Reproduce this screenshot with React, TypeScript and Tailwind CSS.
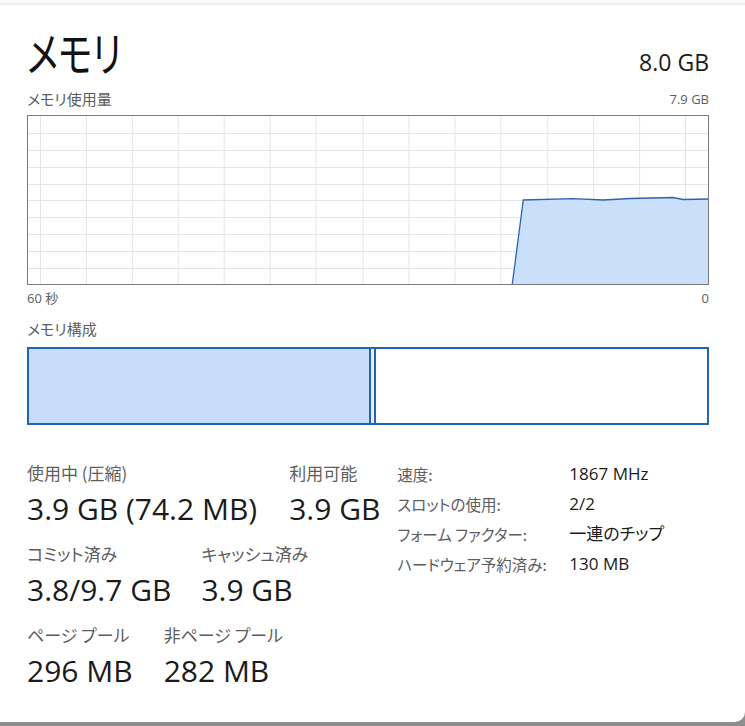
import React from 'react';

const JP = "font-['Noto_Sans_CJK_JP',sans-serif] [font-feature-settings:'palt']";
const LAT = "font-['Open_Sans','Noto_Sans_CJK_JP',sans-serif] [font-feature-settings:'palt']";

const vLines = [12, 58, 104, 150, 196, 242, 288, 335, 381, 427, 473, 520, 566, 612, 658];
const hLines = [17, 34, 51, 68, 84, 101, 118, 135, 152];

const UsageGraph: React.FC = () => {
    const pts = '485,168 496,84 546,82.7 576,84 603,82.5 646,81.5 656,83.5 682,83';
    return (
        <div className="h-[170px] w-full border border-[#7b7b7b] bg-white">
            <svg width="100%" height="168" viewBox="0 0 681 168" preserveAspectRatio="none" className="block">
                {vLines.map(x => (
                    <line key={`v${x}`} x1={x + 0.5} y1={0} x2={x + 0.5} y2={168} stroke="#e5e5e5" strokeWidth={1} />
                ))}
                {hLines.map(y => (
                    <line key={`h${y}`} x1={0} y1={y + 0.5} x2={681} y2={y + 0.5} stroke="#e5e5e5" strokeWidth={1} />
                ))}
                <polygon points={`${pts} 682,168`} fill="#c3dbfa" fillOpacity={0.9} />
                <polyline points={pts} fill="none" stroke="#2c63b3" strokeWidth={1.3} />
            </svg>
        </div>
    );
};

const CompositionBar: React.FC = () => (
    <div className="flex h-[78px] w-full border-2 border-[#2262b9]">
        <div className="w-[342px] border-r-2 border-[#2262b9] bg-[#c8ddf9]" />
        <div className="w-[3px] bg-[#e8f0fb]" />
        <div className="flex-1 border-l-2 border-[#2262b9] bg-white" />
    </div>
);

const Stat: React.FC<{ label: string; value: string }> = ({ label, value }) => (
    <div className="flex flex-col">
        <span className={`${JP} text-[17px] leading-[20px] text-[#5d5d5d]`}>{label}</span>
        <span className={`${LAT} mt-[8px] text-[30px] leading-[36px] text-[#1b1b1b]`}>{value}</span>
    </div>
);

const details: [string, string][] = [
    ['速度:', '1867 MHz'],
    ['スロットの使用:', '2/2'],
    ['フォーム ファクター:', '一連のチップ'],
    ['ハードウェア予約済み:', '130 MB'],
];

export default function App() {
    return (
        <div className="h-[726px] w-[745px] overflow-hidden bg-[#8d8d8d]">
            <div className="h-[722px] rounded-br-[10px] bg-white">
                <div className="h-[3px] bg-[#fafafa]" />
                <div className="h-[2px] bg-[#ececec]" />
                <div className="pl-[27px] pr-[36px]">
                    <div className="mt-[18px] flex items-baseline justify-between">
                        <h1 className={`${JP} inline-block origin-left scale-x-[0.76] text-[47px] leading-[56px] font-normal text-[#111]`}>メモリ</h1>
                        <span className={`${LAT} text-[23px] text-[#1b1b1b]`}>8.0 GB</span>
                    </div>

                    <div className="mt-[9px] flex items-end justify-between">
                        <span className={`${JP} text-[15px] leading-[20px] text-[#5d5d5d]`}>メモリ使用量</span>
                        <span className={`${LAT} text-[13px] leading-[20px] text-[#5d5d5d]`}>7.9 GB</span>
                    </div>
                    <div className="mt-[6px]">
                        <UsageGraph />
                    </div>
                    <div className="mt-[3px] flex justify-between">
                        <span className={`${LAT} text-[13px] leading-[20px] text-[#5d5d5d]`}>60 秒</span>
                        <span className={`${LAT} text-[13px] leading-[20px] text-[#5d5d5d]`}>0</span>
                    </div>

                    <div className={`${JP} mt-[11px] text-[15px] leading-[20px] text-[#5d5d5d]`}>メモリ構成</div>
                    <div className="mt-[8px]">
                        <CompositionBar />
                    </div>

                    <div className="mt-[38px] flex items-start">
                        <div className="flex flex-col gap-[17px]">
                            <div className="flex gap-[32px]">
                                <Stat label="使用中 (圧縮)" value="3.9 GB (74.2 MB)" />
                                <Stat label="利用可能" value="3.9 GB" />
                            </div>
                            <div className="flex gap-[30px]">
                                <Stat label="コミット済み" value="3.8/9.7 GB" />
                                <Stat label="キャッシュ済み" value="3.9 GB" />
                            </div>
                            <div className="flex gap-[31px]">
                                <Stat label="ページ プール" value="296 MB" />
                                <Stat label="非ページ プール" value="282 MB" />
                            </div>
                        </div>
                        <div className="ml-[17px] grid grid-cols-[172px_auto] content-start gap-y-[8px]">
                            {details.map(([k, v]) => (
                                <React.Fragment key={k}>
                                    <span className={`${JP} text-[15.5px] leading-[22px] text-[#5d5d5d]`}>{k}</span>
                                    <span className={`${LAT} text-[17px] leading-[22px] text-[#1b1b1b]`}>{v}</span>
                                </React.Fragment>
                            ))}
                        </div>
                    </div>
                </div>
            </div>
        </div>
    );
}
